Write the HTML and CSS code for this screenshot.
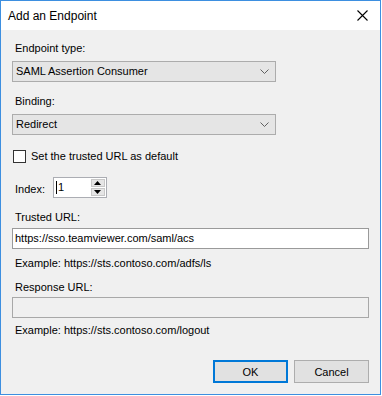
FILE: index.html
```html
<!DOCTYPE html>
<html>
<head>
<meta charset="utf-8">
<link rel="stylesheet" href="styles.css">
</head>
<body>
<div class="window">
  <div class="titlebar">
    <span class="title">Add an Endpoint</span>
    <svg class="close" width="11" height="11" viewBox="0 0 11 11"><path d="M0.5 0.5 L10.5 10.5 M10.5 0.5 L0.5 10.5" stroke="#000" stroke-width="1.1" fill="none"/></svg>
  </div>
  <div class="content">
    <div class="label first">Endpoint type:</div>
    <div class="combo gap-s">
      <span class="combo-text">SAML Assertion Consumer</span>
      <svg class="chev" width="9" height="5" viewBox="0 0 9 5"><path d="M0.5 0.5 L4.5 4.5 L8.5 0.5" stroke="#606060" stroke-width="1" fill="none"/></svg>
    </div>
    <div class="label gap-l">Binding:</div>
    <div class="combo gap-s">
      <span class="combo-text">Redirect</span>
      <svg class="chev" width="9" height="5" viewBox="0 0 9 5"><path d="M0.5 0.5 L4.5 4.5 L8.5 0.5" stroke="#606060" stroke-width="1" fill="none"/></svg>
    </div>
    <div class="check-row">
      <span class="checkbox"></span>
      <span class="check-label">Set the trusted URL as default</span>
    </div>
    <div class="index-row">
      <span class="index-label">Index:</span>
      <div class="spin">
        <span class="spin-text"><i class="caret"></i>1</span>
        <div class="spin-btns">
          <span class="spin-btn"><svg width="7" height="4" viewBox="0 0 7 4"><path d="M3.5 0 L7 4 L0 4 Z" fill="#000"/></svg></span>
          <span class="spin-btn"><svg width="7" height="4" viewBox="0 0 7 4"><path d="M0 0 L7 0 L3.5 4 Z" fill="#000"/></svg></span>
        </div>
      </div>
    </div>
    <div class="label gap-m">Trusted URL:</div>
    <div class="textbox tb1">https://sso.teamviewer.com/saml/acs</div>
    <div class="label example ex1">Example: https://sts.contoso.com/adfs/ls</div>
    <div class="label lbl4">Response URL:</div>
    <div class="textbox tb2 readonly"></div>
    <div class="label example ex2">Example: https://sts.contoso.com/logout</div>
    <div class="buttons">
      <button class="btn default">OK</button>
      <button class="btn">Cancel</button>
    </div>
  </div>
</div>
</body>
</html>
```
FILE: styles.css
```css
html, body {
  margin: 0;
  padding: 0;
  background: #ffffff;
}
body {
  font-family: "Liberation Sans", Arial, sans-serif;
  font-size: 11px;
  color: #000;
}
.window {
  box-sizing: border-box;
  width: 381px;
  height: 395px;
  border: 1px solid #3d8fe0;
  background: #f0f0f0;
  display: flex;
  flex-direction: column;
}
.titlebar {
  height: 29px;
  background: #ffffff;
  display: flex;
  align-items: center;
  justify-content: space-between;
  padding: 0 12px 0 7px;
  flex: none;
}
.title {
  font-size: 12px;
  line-height: 14px;
  color: #000;
}
.close {
  display: block;
}
.content {
  padding: 12px 11px 0 11px;
  display: flex;
  flex-direction: column;
  align-items: flex-start;
}
.label {
  line-height: 13px;
  height: 13px;
  padding-left: 3px;
  white-space: nowrap;
}
.gap-l { margin-top: 13px; }
.gap-m { margin-top: 13px; }
.gap-s { margin-top: 6px; }
.combo {
  box-sizing: border-box;
  width: 264px;
  height: 21px;
  background: #e5e5e5;
  border: 1px solid #acacac;
  display: flex;
  align-items: center;
  justify-content: space-between;
  padding: 0 6px 0 3px;
}
.combo-text {
  line-height: 13px;
}
.chev {
  display: block;
}
.check-row {
  margin-top: 15px;
  height: 13px;
  display: flex;
  align-items: center;
  gap: 5px;
  padding-left: 1px;
}
.checkbox {
  box-sizing: border-box;
  width: 13px;
  height: 13px;
  border: 1px solid #333333;
  background: #ffffff;
}
.check-label {
  line-height: 13px;
}
.index-row {
  margin-top: 14px;
  height: 21px;
  display: flex;
  align-items: center;
  padding-left: 3px;
  gap: 8px;
}
.index-label {
  line-height: 13px;
  padding-top: 3px;
}
.spin {
  box-sizing: border-box;
  width: 54px;
  height: 21px;
  background: #ffffff;
  border: 1px solid #abadb3;
  display: flex;
  align-items: center;
  justify-content: space-between;
  padding: 1px 1px 1px 2px;
}
.spin-text {
  display: flex;
  align-items: center;
  line-height: 13px;
}
.caret {
  display: inline-block;
  width: 1px;
  height: 13px;
  background: #000;
  margin-right: 1px;
}
.spin-btns {
  display: flex;
  flex-direction: column;
  gap: 1px;
  height: 17px;
}
.spin-btn {
  box-sizing: border-box;
  width: 14px;
  height: 8px;
  background: #e5e5e5;
  border: 1px solid #c8c8c8;
  display: flex;
  align-items: center;
  justify-content: center;
}
.spin-btn svg {
  display: block;
}
.textbox {
  box-sizing: border-box;
  width: 357px;
  height: 21px;
  background: #ffffff;
  border: 1px solid #9a9a9a;
  padding: 0 2px;
  line-height: 19px;
  white-space: nowrap;
}
.tb1 { margin-top: 4px; }
.tb2 { margin-top: 3px; }
.readonly {
  background: #f0f0f0;
  border-color: #a8a8a8;
}
.ex1 { margin-top: 8px; }
.lbl4 { margin-top: 11px; }
.ex2 { margin-top: 6px; }
.buttons {
  margin-top: 23px;
  align-self: stretch;
  display: flex;
  justify-content: flex-end;
  gap: 6px;
}
.btn {
  box-sizing: border-box;
  width: 75px;
  height: 23px;
  background: #e1e1e1;
  border: 1px solid #adadad;
  font-family: "Liberation Sans", Arial, sans-serif;
  font-size: 11px;
  color: #000;
  padding: 0;
  margin: 0;
}
.btn.default {
  border: 1px solid #0078d7;
  box-shadow: inset 0 0 0 1px #0078d7;
}
```
